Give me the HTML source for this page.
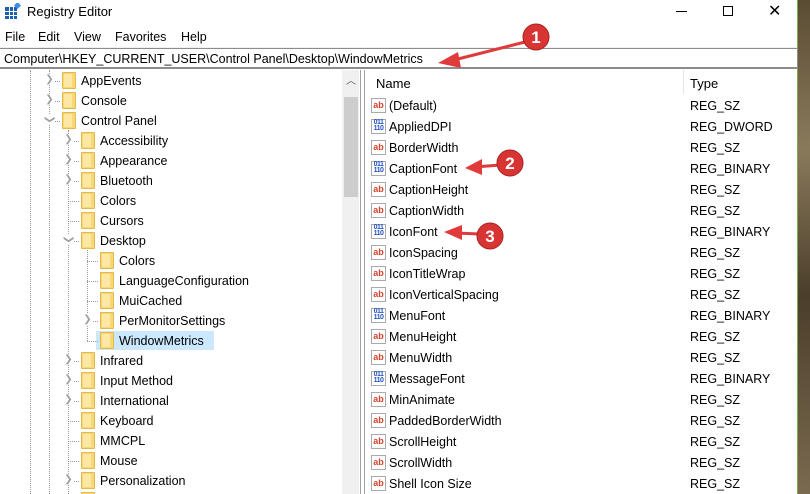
<!DOCTYPE html>
<html style="height:494px;overflow:hidden"><head><style>
*{margin:0;padding:0;box-sizing:border-box}
body{width:810px;height:494px;overflow:hidden;background:#fff;font-family:"Liberation Sans",sans-serif;font-size:12.5px;color:#000;position:relative}
.a{position:absolute;white-space:nowrap}
.fd{position:absolute;width:14px;height:17px;background:#f8d775;border:1px solid #e2b94a;border-radius:1px}
.fd:after{content:"";position:absolute;left:1px;top:1px;right:3px;bottom:1px;background:#fde7a5}
.ch{position:absolute;color:#a0a0a0;font-size:10px;background:#fff}
.ic{position:absolute;width:15px;height:15px;border:1px solid #aaa;background:#fff;font-size:9px;font-weight:bold;line-height:12px;text-align:center}
.ab{color:#d6432b}
.bn{color:#2452c4;font-size:7px;line-height:6px;letter-spacing:-0.5px}
</style></head><body>
<div class="a" style="left:797px;top:0;width:13px;height:494px;background:linear-gradient(#5a4c33,#8a7a5c 30%,#4b3e2a 60%,#7a6a50);border-left:1px solid #7fae3e"></div>
<svg class="a" style="left:5px;top:3px" width="16" height="16"><rect x="0" y="4" width="12" height="12" fill="#1e5fb0"/><rect x="4" y="4" width="1" height="12" fill="#fff"/><rect x="8" y="4" width="1" height="12" fill="#fff"/><rect x="0" y="8" width="12" height="1" fill="#fff"/><rect x="0" y="12" width="12" height="1" fill="#fff"/><rect x="10" y="0" width="5" height="5" fill="#3a8ee6" transform="rotate(45 12.5 2.5)"/></svg>
<div class="a" style="left:27px;top:4px;font-size:13px">Registry Editor</div>
<div class="a" style="left:676px;top:11px;width:11px;height:1px;background:#000"></div>
<div class="a" style="left:723px;top:6px;width:10px;height:10px;border:1px solid #000"></div>
<div class="a" style="left:768px;top:1px;font-size:16px;font-weight:300">✕</div>
<div class="a" style="left:5px;top:30px">File</div>
<div class="a" style="left:38px;top:30px">Edit</div>
<div class="a" style="left:74px;top:30px">View</div>
<div class="a" style="left:115px;top:30px">Favorites</div>
<div class="a" style="left:181px;top:30px">Help</div>
<div class="a" style="left:0;top:47px;width:797px;height:2px;background:#f0f0f0"></div>
<div class="a" style="left:0;top:48px;width:798px;height:21px;border:1px solid #8c8c8c;border-left:none;border-bottom:2px solid #8c8c8c"></div>
<div class="a" style="left:4px;top:52px">Computer\HKEY_CURRENT_USER\Control Panel\Desktop\WindowMetrics</div>
<div class="a" style="left:30px;top:70px;width:0;height:424px;border-left:1px dotted #999"></div>
<div class="a" style="left:49px;top:70px;width:0;height:424px;border-left:1px dotted #999"></div>
<div class="a" style="left:68px;top:130px;width:0;height:364px;border-left:1px dotted #999"></div>
<div class="a" style="left:87px;top:250px;width:0;height:91px;border-left:1px dotted #999"></div>
<div class="a" style="left:96px;top:331px;width:118px;height:19px;background:#cce8ff"></div>
<div id="tree"></div>
<div class="a" style="left:342px;top:70px;width:17px;height:424px;background:#f0f0f0"></div>
<div class="a" style="left:344px;top:97px;width:14px;height:100px;background:#cdcdcd"></div>
<div class="a" style="left:346px;top:72px;font-size:10px;color:#555">︿</div>
<div class="a" style="left:360px;top:70px;width:1px;height:424px;background:#a0a0a0"></div>
<div class="a" style="left:364px;top:70px;width:1px;height:424px;background:#a0a0a0"></div>
<div class="a" style="left:376px;top:76px;font-size:13px">Name</div>
<div class="a" style="left:683px;top:70px;width:1px;height:24px;background:#e5e5e5"></div>
<div class="a" style="left:690px;top:76px;font-size:13px">Type</div>
<div id="list"></div>
<svg class="a" style="left:0;top:0" width="810" height="494">
<g fill="#e03a3a" stroke="#e03a3a">
<line x1="525" y1="42" x2="450" y2="61" stroke-width="3"/><polygon points="438,63 458,52 461,68" stroke="none"/>
<circle cx="536" cy="37" r="13" fill="#d93434" stroke="#a82020" stroke-width="1"/>
<line x1="500" y1="165" x2="475" y2="167" stroke-width="3"/><polygon points="465,168 482,159 482,175" stroke="none"/>
<circle cx="510" cy="163" r="13" fill="#d93434" stroke="#a82020" stroke-width="1"/>
<line x1="480" y1="234" x2="455" y2="233" stroke-width="3"/><polygon points="444,232 462,225 462,240" stroke="none"/>
<circle cx="490" cy="236" r="13" fill="#d93434" stroke="#a82020" stroke-width="1"/>
</g>
<g fill="#fff" font-family="Liberation Sans" font-weight="bold" font-size="17" text-anchor="middle">
<text x="536" y="43">1</text><text x="510" y="169">2</text><text x="490" y="242">3</text></g>
</svg>
<script>
var t=[[1,">","AppEvents"],[1,">","Console"],[1,"v","Control Panel"],[2,">","Accessibility"],[2,">","Appearance"],[2,">","Bluetooth"],[2,"","Colors"],[2,"","Cursors"],[2,"v","Desktop"],[3,"","Colors"],[3,"","LanguageConfiguration"],[3,"","MuiCached"],[3,">","PerMonitorSettings"],[3,"","WindowMetrics"],[2,">","Infrared"],[2,">","Input Method"],[2,">","International"],[2,"","Keyboard"],[2,"","MMCPL"],[2,"","Mouse"],[2,">","Personalization"],[2,">",""]];
var h="";t.forEach(function(r,i){var y=73+i*20,x=r[0]*19+43,lx=x-13;
h+='<div class="a" style="left:'+lx+'px;top:'+(y+8)+'px;width:11px;border-top:1px dotted #999"></div>';
if(r[1])h+='<div class="ch" style="left:'+(lx-4)+'px;top:'+(y+1)+'px;width:9px;text-align:center;'+(r[1]=="v"?'transform:rotate(90deg)':'')+'">❯</div>';
h+='<div class="fd" style="left:'+x+'px;top:'+(y-1)+'px"></div><div class="a" style="left:'+(x+19)+'px;top:'+(y+1)+'px;z-index:2">'+r[2]+'</div>';});
document.getElementById("tree").innerHTML=h;
var l=[["a","(Default)","REG_SZ"],["b","AppliedDPI","REG_DWORD"],["a","BorderWidth","REG_SZ"],["b","CaptionFont","REG_BINARY"],["a","CaptionHeight","REG_SZ"],["a","CaptionWidth","REG_SZ"],["b","IconFont","REG_BINARY"],["a","IconSpacing","REG_SZ"],["a","IconTitleWrap","REG_SZ"],["a","IconVerticalSpacing","REG_SZ"],["b","MenuFont","REG_BINARY"],["a","MenuHeight","REG_SZ"],["a","MenuWidth","REG_SZ"],["b","MessageFont","REG_BINARY"],["a","MinAnimate","REG_SZ"],["a","PaddedBorderWidth","REG_SZ"],["a","ScrollHeight","REG_SZ"],["a","ScrollWidth","REG_SZ"],["a","Shell Icon Size","REG_SZ"]];
h="";l.forEach(function(r,i){var y=98+i*21;
h+='<div class="ic '+(r[0]=="a"?"ab":"bn")+'" style="left:371px;top:'+y+'px">'+(r[0]=="a"?"ab":"011<br>110")+'</div>';
h+='<div class="a" style="left:389px;top:'+(y+1)+'px">'+r[1]+'</div><div class="a" style="left:690px;top:'+(y+1)+'px">'+r[2]+'</div>';});
document.getElementById("list").innerHTML=h;
</script>
</body></html>
